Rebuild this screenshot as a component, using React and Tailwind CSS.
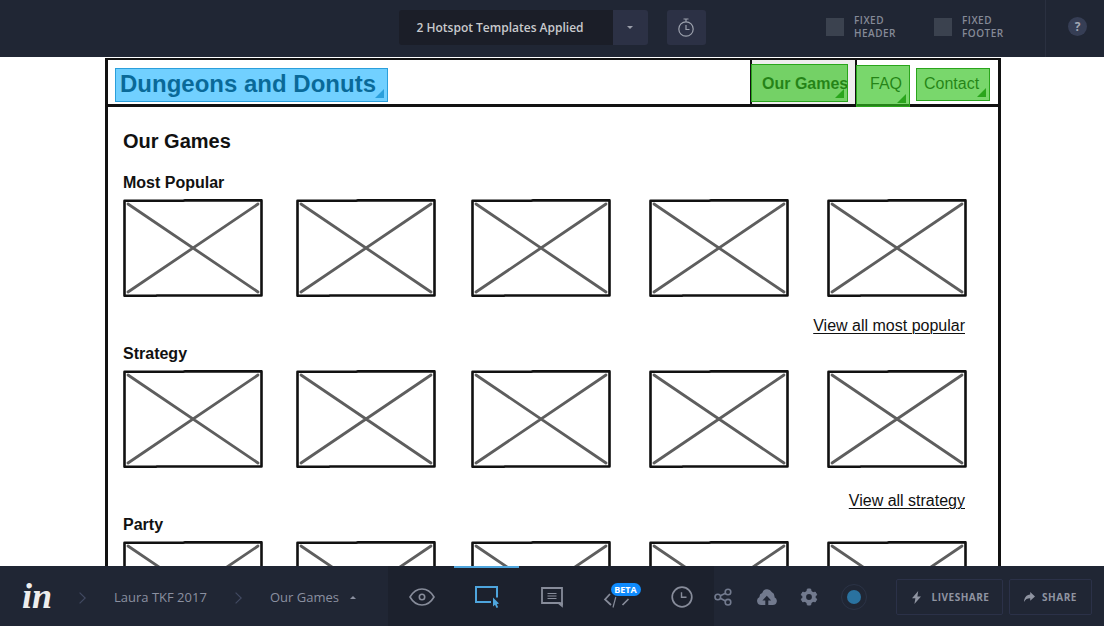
import React from "react";

const sections = [
  { title: "Most Popular", link: "View all most popular", linkPad: "pt-[17px]" },
  { title: "Strategy", link: "View all strategy", linkPad: "pt-[21px]" },
  { title: "Party" },
];

function Placeholder() {
  return (
    <svg viewBox="0 0 140 98" className="block h-[98px] w-[140px]" fill="none" aria-hidden="true">
      <path d="M5 5 135 93M135 5 5 93" stroke="#5e5e5e" strokeWidth="2.8" strokeLinecap="round" />
      <path d="M1.5 1.8 60 1.7 62 1.4 138.5 1.4 138.5 96.5 34 96.5 33 96.7 1.5 96.7Z" stroke="#111" strokeWidth="2.6" strokeLinejoin="round" />
    </svg>
  );
}

function Corner({ className }) {
  return (
    <svg viewBox="0 0 9 9" className={`absolute right-[3px] bottom-[3px] h-[9px] w-[9px] ${className}`} aria-hidden="true">
      <path d="M9 0V9H0Z" fill="currentColor" />
    </svg>
  );
}

function Hotspot({ place }) {
  return (
    <span className={`absolute z-10 border border-[#2aa51c] bg-[#31c11d]/65 ${place}`}>
      <Corner className="text-[#2aa51c]" />
    </span>
  );
}

function TopBar() {
  return (
    <header className="grid h-[57px] shrink-0 grid-cols-[1fr_auto_1fr] bg-[#202634]">
      <div />
      <div className="flex items-center pb-[2px]">
        <button className="h-[35px] w-[214px] rounded-l-[3px] bg-[#1b1e28] pl-[18px] text-left text-[12px] font-semibold text-[#c9cacd]">
          2 Hotspot Templates Applied
        </button>
        <button aria-label="Choose template" className="flex h-[35px] w-[35px] items-center justify-center rounded-r-[3px] bg-[#2c3145]">
          <svg viewBox="0 0 6 3" className="h-[3px] w-[6px]"><path d="M0 0H6L3 3Z" fill="#9a9ea9" /></svg>
        </button>
        <button aria-label="Timer" className="ml-[19px] flex h-[35px] w-[39px] items-center justify-center rounded-[3px] bg-[#2c3145] pb-[2px]">
          <svg viewBox="0 0 18 20" className="h-[20px] w-[18px]" fill="none" stroke="#9ca1ad" strokeWidth="1.2">
            <circle cx="9" cy="12" r="7.2" />
            <path d="M6.5 2H11.5M9 2V4.8M9 8V12.5H12.5" />
          </svg>
        </button>
      </div>
      <div className="flex items-stretch justify-end">
        <label className="flex items-center gap-[10px] pb-[3px]">
          <input type="checkbox" className="h-[18px] w-[18px] appearance-none bg-[#3b424f]" />
          <span className="w-[54px] text-[10px] leading-[13px] font-semibold tracking-wider text-[#858a97]">FIXED HEADER</span>
        </label>
        <label className="ml-[26px] flex items-center gap-[10px] pb-[3px]">
          <input type="checkbox" className="h-[18px] w-[18px] appearance-none bg-[#3b424f]" />
          <span className="w-[54px] text-[10px] leading-[13px] font-semibold tracking-wider text-[#858a97]">FIXED FOOTER</span>
        </label>
        <div className="ml-[29px] flex w-[59px] items-center border-l border-[#2a3040] pb-[4px] pl-[22px]">
          <button className="h-[19px] w-[19px] rounded-full bg-[#363e55] text-[12px] leading-[19px] font-bold text-[#a2a7b3]" aria-label="Help">?</button>
        </div>
      </div>
    </header>
  );
}

function Wireframe() {
  return (
    <main className="min-h-0 flex-1 overflow-hidden bg-white pl-[2px] font-['Liberation_Sans',Arial,sans-serif] text-[#111]">
      <div className="mx-auto mt-px min-h-full w-full max-w-[896px] border-x-[3px] border-t-2 border-[#111]">
        <div className="flex h-[47px] items-stretch justify-between border-b-[3px] border-[#111]">
          <h1 className="relative mt-[8px] ml-[7px] h-[34px] w-[273px] pl-[5px] text-[24px] leading-[32px] font-bold whitespace-nowrap">
            Dungeons and Donuts
            <span className="absolute inset-0 border border-[#2b9fdb] bg-[#06adff]/57">
              <Corner className="text-[#2b9fdb]" />
            </span>
          </h1>
          <nav className="flex items-stretch pr-[8px] text-[16px] leading-[48px]">
            <a href="#games" className="relative w-[107px] border-x-2 border-[#111] bg-[#efedee] pl-[10px] font-bold whitespace-nowrap">
              Our Games
              <Hotspot place="-left-px top-[4px] h-[38px] w-[97px]" />
            </a>
            <a href="#faq" className="relative w-[53px] pl-[13px]">
              FAQ
              <Hotspot place="-left-px top-[5px] h-[42px] w-[54px]" />
            </a>
            <a href="#contact" className="relative ml-[6px] w-[74px] pl-[8px]">
              Contact
              <Hotspot place="left-0 top-[8px] h-[33px] w-[74px]" />
            </a>
          </nav>
        </div>
        <div className="px-[15px] pt-[20px]">
          <h2 className="text-[20px] leading-[28px] font-bold">Our Games</h2>
          <div className="pt-[16px]">
            {sections.map((s) => (
              <section key={s.title} className="h-[171px] max-w-[844px]">
                <h3 className="text-[16px] leading-[24px] font-bold">{s.title}</h3>
                <div className="grid grid-cols-[173fr_175fr_178fr_178fr_140fr] pt-[4px]">
                  {[0, 1, 2, 3, 4].map((i) => <Placeholder key={i} />)}
                </div>
                {s.link && (
                  <div className={`pr-[2px] text-right ${s.linkPad}`}>
                    <a href="#all" className="inline-block text-[16px] leading-[20px] underline decoration-1 underline-offset-2">{s.link}</a>
                  </div>
                )}
              </section>
            ))}
          </div>
        </div>
      </div>
    </main>
  );
}

function Chevron() {
  return (
    <svg viewBox="0 0 7 12" className="h-[12px] w-[7px]" fill="none" stroke="#424a62" strokeWidth="1.2"><path d="M.6.6 6.2 6 .6 11.4" /></svg>
  );
}

function Tool({ label, active, children }) {
  return (
    <button
      aria-label={label}
      className={`flex w-[65px] items-center justify-center border-t-2 ${active ? "border-[#4ea5dd] text-[#4ea5dd]" : "border-transparent text-[#878c9a]"}`}
    >
      {children}
    </button>
  );
}

function BottomBar() {
  return (
    <footer className="grid h-[60px] shrink-0 grid-cols-[1fr_auto_1fr] bg-[#202634]">
      <nav className="flex items-center pt-[3px] pl-[22px] text-[13px] text-[#8b90a0]">
        <a href="#home" aria-label="Home" className="w-[57px] pb-[4px] font-['Liberation_Serif',serif] text-[36px] leading-[36px] font-bold text-[#eeeeee] italic">in</a>
        <Chevron />
        <a href="#project" className="ml-[28px] w-[93px] whitespace-nowrap">Laura TKF 2017</a>
        <span className="ml-[28px] flex"><Chevron /></span>
        <button className="ml-[28px] flex items-center gap-[11px] whitespace-nowrap">
          Our Games
          <svg viewBox="0 0 6 3" className="h-[3px] w-[6px]"><path d="M0 3H6L3 0Z" fill="#8b90a0" /></svg>
        </button>
      </nav>
      <div className="flex items-stretch bg-[#1c212d] pl-px">
        <Tool label="Preview">
          <svg viewBox="0 0 26 18" className="h-[18px] w-[26px]" fill="none" stroke="currentColor" strokeWidth="1.6">
            <path d="M1 9C4 3.8 8 1 13 1S22 3.8 25 9C22 14.2 18 17 13 17S4 14.2 1 9Z" />
            <circle cx="13" cy="9" r="2.7" />
          </svg>
        </Tool>
        <Tool label="Hotspots" active>
          <svg viewBox="0 0 24 22" className="h-[22px] w-[24px]" fill="none">
            <path d="M16 16H1V1H22V11.5" stroke="currentColor" strokeWidth="2" />
            <path d="M18 11.5V20.5L20 18.8 21.5 22 23.2 21.2 21.8 18.2 24 17.6Z" fill="currentColor" />
          </svg>
        </Tool>
        <Tool label="Comments">
          <svg viewBox="0 0 22 21" className="h-[21px] w-[22px]" fill="none" stroke="currentColor">
            <path d="M1 1H21V17L19 16H1Z" strokeWidth="1.8" />
            <path d="M16 16H21.8V20.8Z" fill="currentColor" stroke="none" />
            <path d="M6.5 6.5H15.5M6.5 9H15.5M6.5 11.5H15.5" strokeWidth="1.2" />
          </svg>
        </Tool>
        <Tool label="Inspect">
          <span className="relative flex pt-[6px]">
            <svg viewBox="0 0 28 16" className="h-[16px] w-[28px]" fill="none" stroke="currentColor" strokeWidth="1.7">
              <path d="M7 2 2 7.5 8 13M19.5 13 25.5 7" />
              <path d="M12.8 5 10 15.5" strokeWidth="1.2" />
            </svg>
            <span className="absolute top-[-3px] left-[8px] h-[13px] w-[30px] rounded-full bg-[#0f8bfd] text-center text-[9px] leading-[13px] font-bold text-white">BETA</span>
          </span>
        </Tool>
        <Tool label="History">
          <svg viewBox="0 0 22 22" className="h-[22px] w-[22px]" fill="none" stroke="currentColor" strokeWidth="1.7">
            <circle cx="11" cy="11" r="9.8" />
            <path d="M10.5 6.2V11.3H15.5" strokeWidth="1.4" />
          </svg>
        </Tool>
      </div>
      <div className="flex items-center justify-end pt-[2px] pr-[12px] text-[#727a8e]">
        <button aria-label="Connections">
          <svg viewBox="0 0 18 18" className="h-[18px] w-[18px]" fill="none" stroke="currentColor" strokeWidth="1.6">
            <circle cx="3.8" cy="9" r="2.8" /><circle cx="14" cy="4" r="2.8" /><circle cx="14" cy="14.2" r="2.8" />
            <path d="M6.3 7.8 11.5 5.2M6.3 10.2 11.5 13" />
          </svg>
        </button>
        <button aria-label="Upload" className="ml-[25px]">
          <svg viewBox="0 0 20 16" className="h-[16px] w-[20px]" fill="currentColor">
            <path d="M8.3 16H4.2A4.2 4.2 0 0 1 2.5 8 3.9 3.9 0 0 1 5.2 4 5.2 5.2 0 0 1 14.7 3 5.2 5.2 0 0 1 17.5 8.2 4.1 4.1 0 0 1 15.8 16H11.3V11.5H14.2L9.8 6.8 5.4 11.5H8.3Z" />
          </svg>
        </button>
        <button aria-label="Settings" className="ml-[23px]">
          <svg viewBox="0 0 18 18" className="h-[18px] w-[18px]" fill="none">
            <circle cx="9" cy="9" r="4.7" stroke="currentColor" strokeWidth="3.6" />
            <path d="M7 3 7.4 1H10.6L11 3ZM7 15 7.4 17H10.6L11 15ZM2.8 8.2 1.2 6.8 2.8 4.1 4.9 4.8ZM4.9 13.2 2.8 13.9 1.2 11.2 2.8 9.8ZM13.1 4.8 15.2 4.1 16.8 6.8 15.2 8.2ZM15.2 9.8 16.8 11.2 15.2 13.9 13.1 13.2Z" fill="currentColor" stroke="currentColor" strokeLinejoin="round" />
          </svg>
        </button>
        <button aria-label="Status" className="ml-[23px] flex h-[26px] w-[26px] items-center justify-center rounded-full border border-[#2b3346]">
          <span className="h-[14px] w-[14px] rounded-full bg-[#2a72a0]" />
        </button>
        <button className="ml-[29px] flex h-[36px] w-[107px] items-center justify-center gap-[11px] rounded-[2px] border border-[#2b3148] pl-[2px] text-[10px] font-bold tracking-wider text-[#8f94a1]">
          <svg viewBox="0 0 9 13" className="h-[13px] w-[9px]" fill="currentColor"><path d="M6.2 0 0 7.2H3.4L2.4 13 9 5.6H5.4Z" /></svg>
          LIVESHARE
        </button>
        <button className="ml-[6px] flex h-[36px] w-[83px] items-center justify-center gap-[7px] rounded-[2px] border border-[#2b3148] text-[10px] font-bold tracking-wider text-[#8f94a1]">
          <svg viewBox="0 0 11 10" className="h-[10px] w-[11px]" fill="currentColor"><path d="M6.2 0 11 4.4 6.2 8.8V6.3C3.5 6.2 1.6 7.2 0 10 .2 5.6 2.4 2.9 6.2 2.6Z" /></svg>
          SHARE
        </button>
      </div>
    </footer>
  );
}

export default function App() {
  return (
    <div className="flex h-screen flex-col overflow-hidden font-['Open_Sans',sans-serif]">
      <TopBar />
      <Wireframe />
      <BottomBar />
    </div>
  );
}
